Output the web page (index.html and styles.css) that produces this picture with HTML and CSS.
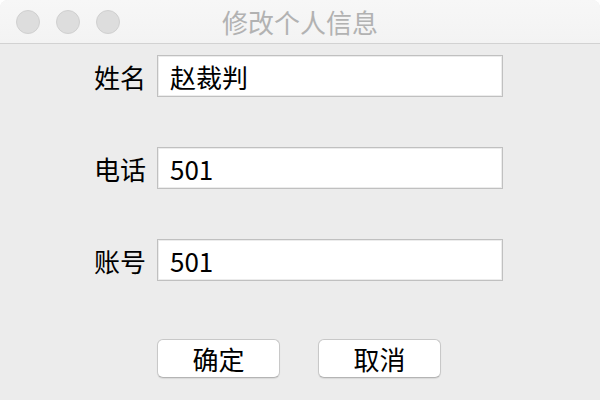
FILE: index.html
```html
<!DOCTYPE html>
<html lang="zh-CN">
<head>
<meta charset="utf-8">
<title>修改个人信息</title>
<link rel="stylesheet" href="styles.css">
</head>
<body>
<div class="window">
  <header class="titlebar">
    <div class="lights">
      <span class="light"></span>
      <span class="light"></span>
      <span class="light"></span>
    </div>
    <div class="title">修改个人信息</div>
  </header>
  <main class="content">
    <div class="row">
      <label class="label">姓名</label>
      <input class="field" type="text" value="赵裁判">
    </div>
    <div class="row">
      <label class="label">电话</label>
      <input class="field" type="text" value="501">
    </div>
    <div class="row">
      <label class="label">账号</label>
      <input class="field" type="text" value="501">
    </div>
    <div class="buttons">
      <button class="btn">确定</button>
      <button class="btn">取消</button>
    </div>
  </main>
</div>
</body>
</html>
```

FILE: styles.css
```css
* { box-sizing: border-box; }
html, body {
  margin: 0;
  padding: 0;
  background: #ffffff;
}
body {
  font-family: "Noto Sans CJK SC", "Noto Sans", sans-serif;
}
.window {
  width: 600px;
  height: 400px;
  background: #ececec;
  border-radius: 8px 8px 0 0;
  overflow: hidden;
  display: flex;
  flex-direction: column;
}
.titlebar {
  height: 44px;
  flex: none;
  background: linear-gradient(#f7f7f7, #f3f3f3);
  border-bottom: 1px solid #d2d2d2;
  position: relative;
  display: flex;
  align-items: flex-start;
}
.lights {
  display: flex;
  gap: 16px;
  padding: 10px 0 0 16px;
}
.light {
  width: 24px;
  height: 24px;
  border-radius: 50%;
  background: #dddddd;
  border: 1px solid #d0d0d0;
}
.title {
  position: absolute;
  left: 0;
  right: 0;
  top: 0;
  height: 43px;
  line-height: 43px;
  text-align: center;
  font-size: 26px;
  color: #b2b2b2;
}
.content {
  display: flex;
  flex-direction: column;
  padding: 11px 0 0 94px;
  gap: 50px;
}
.row {
  display: flex;
  align-items: center;
  gap: 11px;
  height: 42px;
}
.label {
  width: 52px;
  font-size: 26px;
  color: #000;
  white-space: nowrap;
}
.field {
  width: 346px;
  height: 42px;
  margin: 0;
  padding: 0 0 0 12px;
  border: 1px solid #c0c0c0;
  box-shadow: inset 0 0 0 1px #ececec;
  background: #fff;
  font-family: "Noto Sans CJK SC", "Noto Sans", sans-serif;
  font-size: 26px;
  color: #000;
  outline: none;
  border-radius: 0;
}
.buttons {
  display: flex;
  gap: 38px;
  padding-left: 63px;
  margin-top: 8px;
}
.btn {
  width: 123px;
  height: 39px;
  margin: 0;
  padding: 0;
  background: #ffffff;
  border: 1px solid #c8c8c8;
  border-bottom-color: #b4b4b4;
  border-radius: 6px;
  box-shadow: 0 1px 1px rgba(0,0,0,0.08);
  font-family: "Noto Sans CJK SC", "Noto Sans", sans-serif;
  font-size: 26px;
  line-height: 37px;
  color: #000;
}
```
